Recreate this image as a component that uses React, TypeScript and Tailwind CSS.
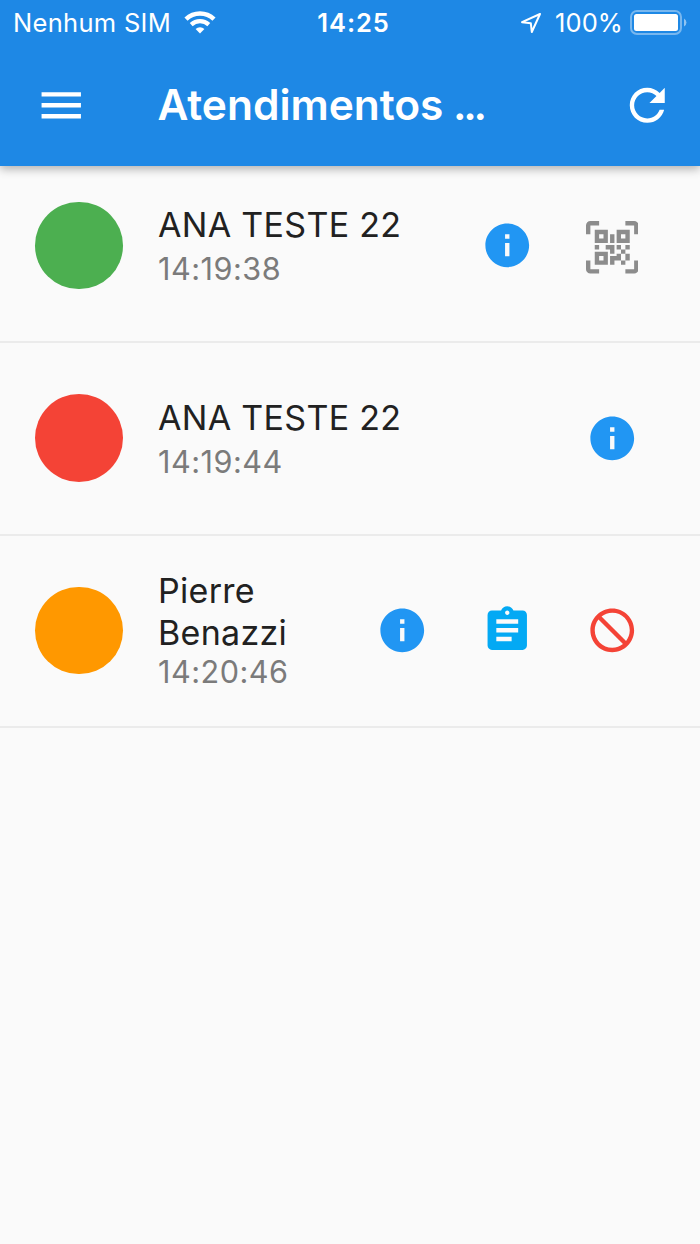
import React from 'react';

type IconProps = { d: string; className: string };

const MENU = 'M3 18h18v-2H3v2zm0-5h18v-2H3v2zm0-7v2h18V6H3z';
const REFRESH =
  'M17.65 6.35C16.2 4.9 14.21 4 12 4c-4.42 0-7.99 3.58-7.99 8s3.57 8 7.99 8c3.73 0 6.84-2.55 7.73-6h-2.08c-.82 2.33-3.04 4-5.65 4-3.31 0-6-2.69-6-6s2.69-6 6-6c1.66 0 3.14.69 4.22 1.78L13 11h7V4l-2.35 2.35z';
const INFO =
  'M12 2C6.48 2 2 6.48 2 12s4.48 10 10 10 10-4.48 10-10S17.52 2 12 2zm1 15h-2v-6h2v6zm0-8h-2V7h2v2z';
const ASSIGNMENT =
  'M19 3h-4.18C14.4 1.84 13.3 1 12 1c-1.3 0-2.4.84-2.82 2H5c-1.1 0-2 .9-2 2v14c0 1.1.9 2 2 2h14c1.1 0 2-.9 2-2V5c0-1.1-.9-2-2-2zm-7 0c.55 0 1 .45 1 1s-.45 1-1 1-1-.45-1-1 .45-1 1-1zm2 14H7v-2h7v2zm3-4H7v-2h10v2zm0-4H7V7h10v2z';
const BLOCK =
  'M12 2C6.48 2 2 6.48 2 12s4.48 10 10 10 10-4.48 10-10S17.52 2 12 2zM4 12c0-4.42 3.58-8 8-8 1.85 0 3.55.63 4.9 1.69L5.69 16.9C4.63 15.55 4 13.85 4 12zm8 8c-1.85 0-3.55-.63-4.9-1.69L18.31 7.1C19.37 8.45 20 10.15 20 12c0 4.42-3.58 8-8 8z';
const QR_SCAN =
  'M4,4H10V10H4V4M20,4V10H14V4H20M14,15H16V13H14V11H16V13H18V11H20V13H18V15H20V18H18V20H16V18H13V20H11V16H14V15M16,15V18H18V15H16M4,20V14H10V20H4M6,6V8H8V6H6M16,6V8H18V6H16M6,16V18H8V16H6M4,11H6V13H4V11M9,11H13V15H11V13H9V11M11,6H13V10H11V6M2,2V6H0V2A2,2 0 0,1 2,0H6V2H2M22,0A2,2 0 0,1 24,2V6H22V2H18V0H22M2,18V22H6V24H2A2,2 0 0,1 0,22V18H2M22,22V18H24V22A2,2 0 0,1 22,24H18V22H22Z';

function Icon({ d, className }: IconProps) {
  return (
    <svg viewBox="0 0 24 24" fill="currentColor" className={`block size-[52.5px] shrink-0 ${className}`}>
      <path d={d} />
    </svg>
  );
}

function StatusBar() {
  return (
    <div className="grid h-[46px] grid-cols-[1fr_auto_1fr] items-center text-[25.5px] leading-[46px]">
      <div className="flex items-center pl-[13px]">
        <span className="w-[171px] tracking-[0.3px] whitespace-nowrap">Nenhum SIM</span>
        <svg viewBox="0 0 32 23" className="-mt-[2px] h-[23px] w-8" fill="none" stroke="currentColor">
          <path d="M2 8.1A20.5 20.5 0 0 1 30 8.1" strokeWidth="4.6" />
          <path d="M7.2 13.6A13 13 0 0 1 24.8 13.6" strokeWidth="4.2" />
          <path d="M16 22.5l-4.4-4.5a6.5 6.5 0 0 1 8.8 0z" fill="currentColor" stroke="none" />
        </svg>
      </div>
      <span className="pl-[7px] font-semibold tracking-[0.9px]">14:25</span>
      <div className="flex items-center justify-end pr-[12px]">
        <svg viewBox="0 0 22 22" className="mr-[13px] size-[22px]" fill="none" stroke="currentColor" strokeWidth="2" strokeLinejoin="round">
          <path d="M20 2 2 10.2l8.8 1 1 8.8z" />
        </svg>
        <span className="mr-[7px] tracking-[0.1px]">100%</span>
        <svg viewBox="0 0 58 25" className="-mt-px h-[25px] w-[58px] shrink-0">
          <rect x="1" y="1" width="50" height="23" rx="6" fill="none" stroke="#fff" strokeOpacity=".4" strokeWidth="2" />
          <rect x="4" y="4" width="44" height="17" rx="2.5" fill="#fff" />
          <path d="M54 8.5a4.5 4.5 0 0 1 0 8z" fill="#fff" fillOpacity=".5" />
        </svg>
      </div>
    </div>
  );
}

type RowProps = {
  name: React.ReactNode;
  time: string;
  dot: string;
  pad: string;
  textPad: string;
  timeGap: string;
  children: React.ReactNode;
};

function Row({ name, time, dot, pad, textPad, timeGap, children }: RowProps) {
  return (
    <li className={`border-b-2 border-[#ebebeb] pr-[62px] pl-[35px] ${pad}`}>
      <div className="flex h-[88px] items-center">
        <div className={`size-[87.5px] shrink-0 rounded-full ${dot}`} />
        <div className={`ml-[35.5px] grow whitespace-nowrap ${textPad}`}>
          <div className="text-[34px] leading-[42px] tracking-[0.3px] text-[#212121]">{name}</div>
          <div className={`text-[30.6px] leading-[38px] tracking-[0.5px] text-[#7b7b7b] ${timeGap}`}>{time}</div>
        </div>
        <div className="flex items-center gap-[52.5px]">{children}</div>
      </div>
    </li>
  );
}

export default function App() {
  return (
    <div className="flex h-[1244px] w-[700px] flex-col overflow-hidden bg-[#fafafa] font-['Inter',sans-serif]">
      <header className="z-10 h-[166px] shrink-0 bg-[#1e88e5] text-white shadow-[0_3px_9px_rgba(0,0,0,0.3)]">
        <StatusBar />
        <div className="flex h-[118px] items-center pr-[27px] pl-[35px]">
          <Icon d={MENU} className="" />
          <h1 className="ml-[70px] grow text-[42.5px] leading-[52px] font-semibold tracking-[-0.05px] whitespace-nowrap">
            Atendimentos <span className="-ml-px tracking-[-3.3px]">...</span>
          </h1>
          <Icon d={REFRESH} className="" />
        </div>
      </header>
      <ul>
        <Row name="ANA TESTE 22" time="14:19:38" dot="bg-[#4caf50]" pad="pt-[35.5px] pb-[51.5px]" textPad="pt-px" timeGap="mt-[4px]">
          <Icon d={INFO} className="text-[#2196f3]" />
          <Icon d={QR_SCAN} className="mt-[4px] text-[#8c8c8c]" />
        </Row>
        <Row name="ANA TESTE 22" time="14:19:44" dot="bg-[#f44336]" pad="pt-[51px] pb-[51.5px]" textPad="pt-px" timeGap="mt-[4px]">
          <Icon d={INFO} className="text-[#2196f3]" />
        </Row>
        <Row name={<>Pierre<br />Benazzi</>} time="14:20:46" dot="bg-[#ff9800]" pad="pt-[51px] pb-[51.5px]" textPad="pt-0" timeGap="-mt-px">
          <Icon d={INFO} className="text-[#2196f3]" />
          <Icon d={ASSIGNMENT} className="text-[#03a9f4]" />
          <Icon d={BLOCK} className="-scale-x-100 text-[#f44336]" />
        </Row>
      </ul>
    </div>
  );
}
